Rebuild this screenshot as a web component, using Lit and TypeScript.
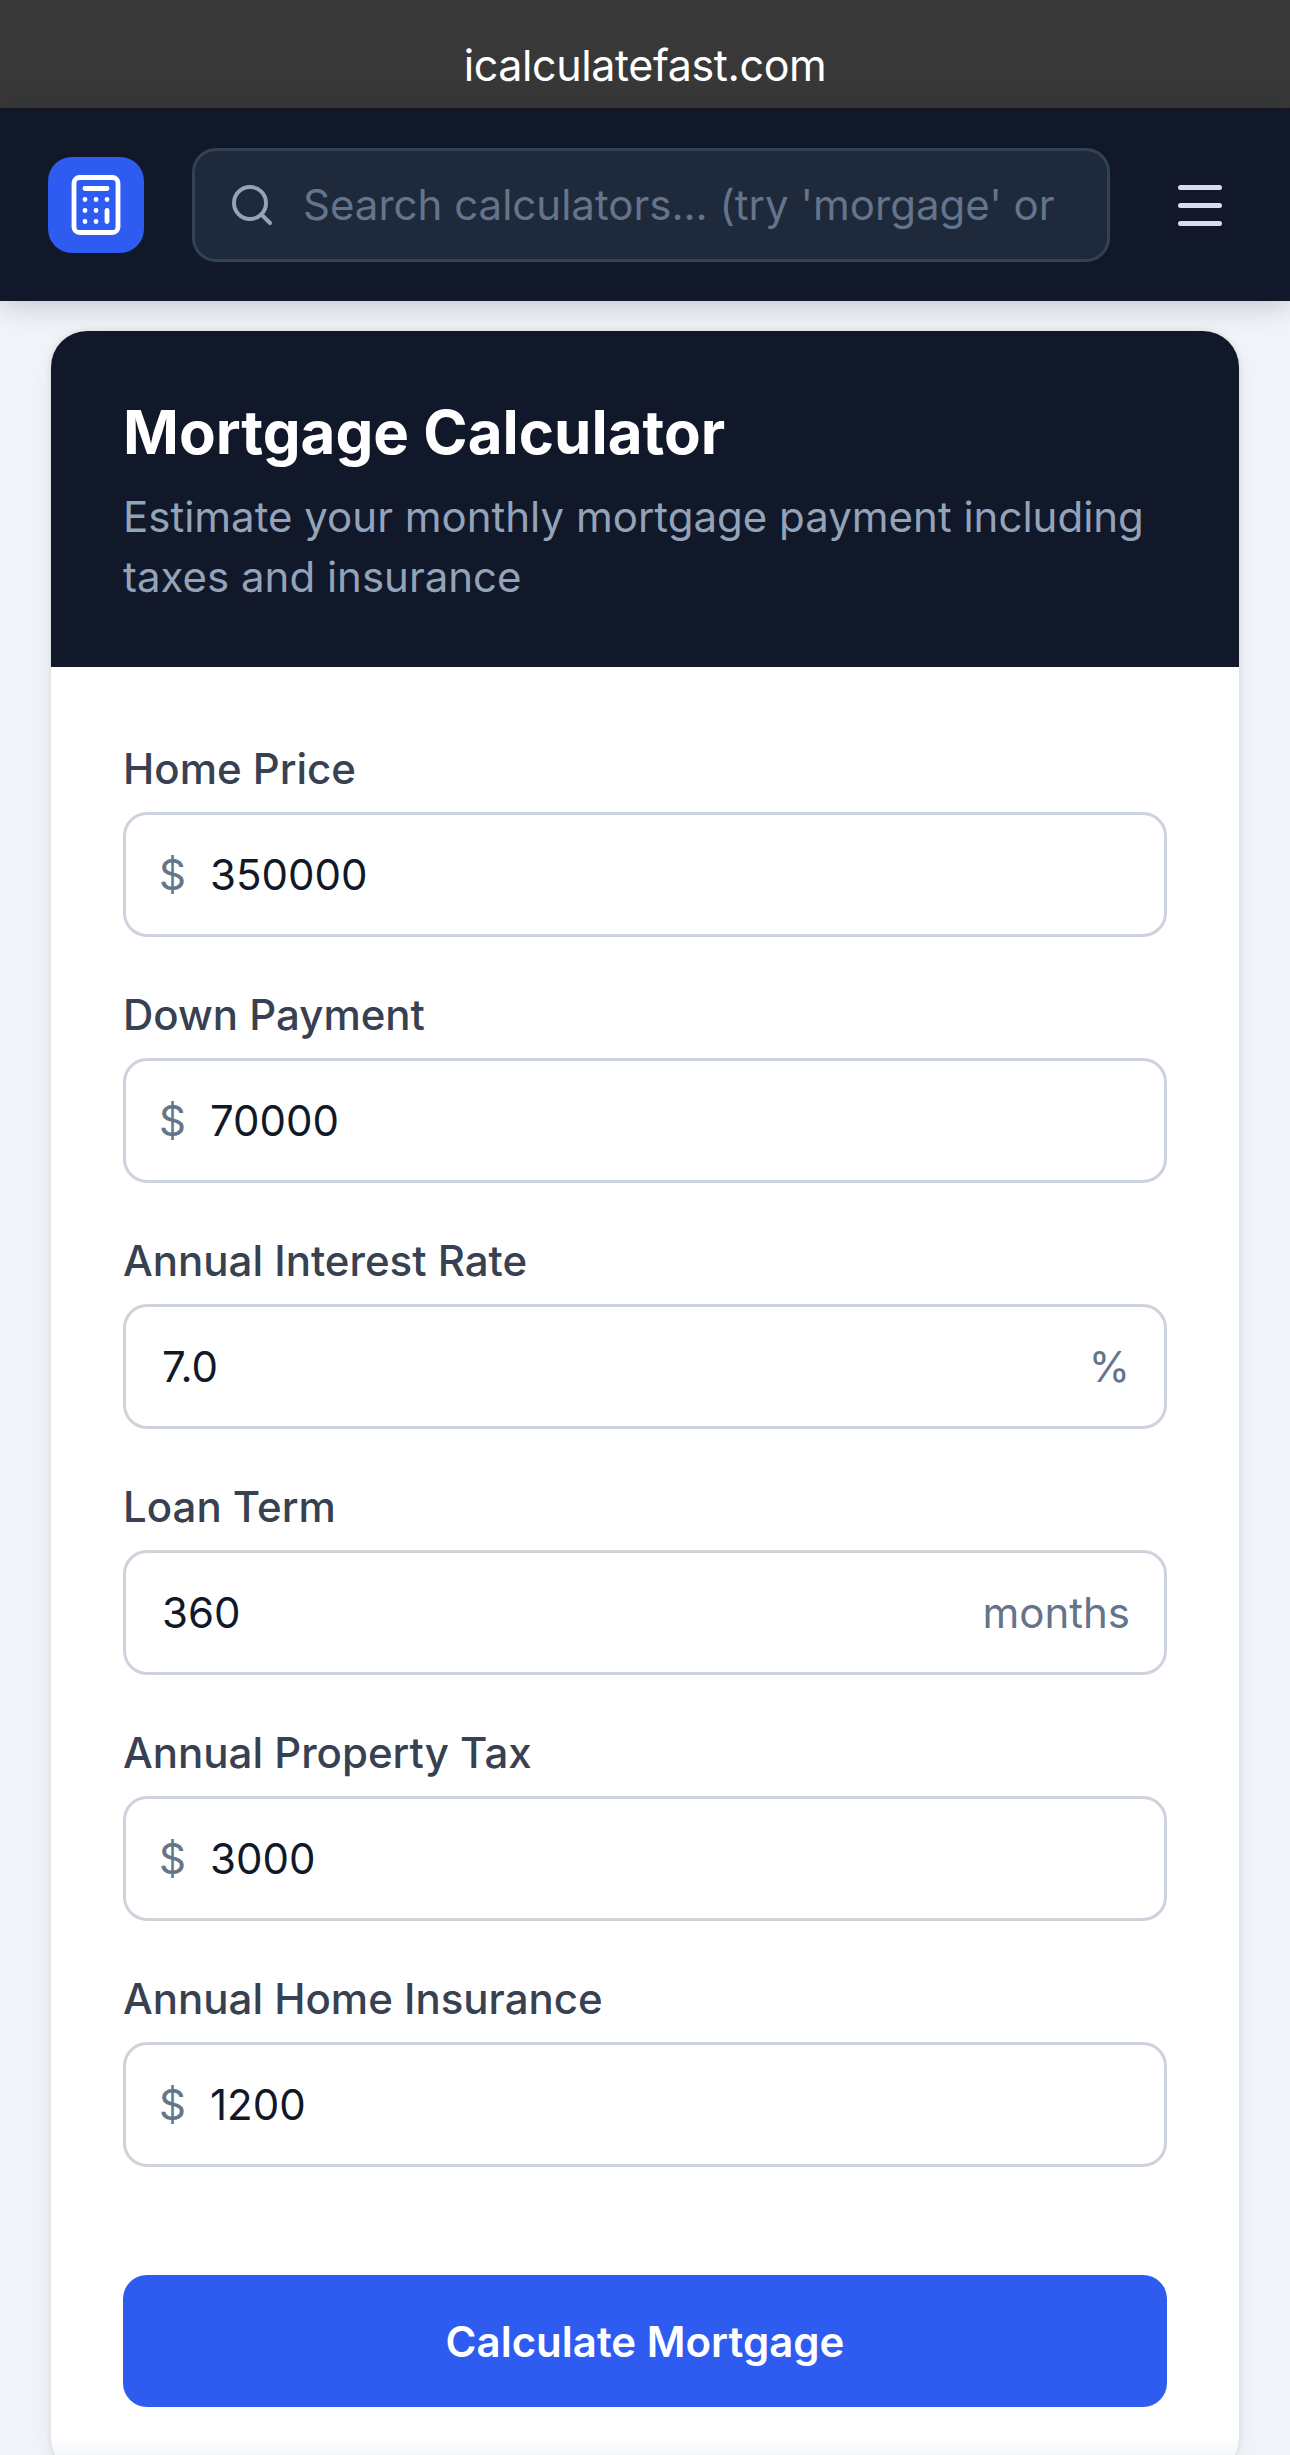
import { LitElement, html, css } from "lit";
import { customElement } from "lit/decorators.js";

type Field = { label: string; value: string; prefix?: string; suffix?: string };

const FIELDS: Field[] = [
  { label: "Home Price", value: "350000", prefix: "$" },
  { label: "Down Payment", value: "70000", prefix: "$" },
  { label: "Annual Interest Rate", value: "7.0", suffix: "%" },
  { label: "Loan Term", value: "360", suffix: "months" },
  { label: "Annual Property Tax", value: "3000", prefix: "$" },
  { label: "Annual Home Insurance", value: "1200", prefix: "$" },
];

@customElement("app-root")
export class AppRoot extends LitElement {
  static styles = css`
    :host {
      display: block;
      height: 100vh;
      overflow: hidden;
      background: #f1f5f9;
      font-family: Inter, "Liberation Sans", sans-serif;
    }
    * {
      box-sizing: border-box;
    }
    .address {
      height: 109px;
      padding-top: 11px;
      background: #383838;
      border-bottom: 1px solid #1a1a1a;
      color: #fff;
      font-size: 43px;
      line-height: 108px;
      text-align: center;
      letter-spacing: -0.4px;
    }
    .header {
      position: relative;
      z-index: 2;
      height: 192px;
      padding: 0 68px 0 48px;
      background: #10182a;
      display: flex;
      align-items: center;
      box-shadow: 0 4px 28px rgba(15, 23, 42, 0.22);
    }
    .logo {
      width: 96px;
      height: 96px;
      flex: none;
      border-radius: 24px;
      background: #2f5cf0;
      display: flex;
      align-items: center;
      justify-content: center;
      margin-right: 48px;
    }
    .search {
      flex: 1;
      min-width: 0;
      height: 114px;
      margin-top: -1px;
      background: #1e293b;
      border: 3px solid #334155;
      border-radius: 24px;
      display: flex;
      align-items: center;
      padding-left: 33px;
      gap: 27px;
    }
    .search svg {
      flex: none;
    }
    .search input {
      flex: 1;
      min-width: 0;
      border: 0;
      outline: 0;
      padding: 0;
      background: none;
      color: #f1f5f9;
      font: 400 42px Inter, "Liberation Sans", sans-serif;
    }
    .search input::placeholder {
      color: #64748b;
      opacity: 1;
    }
    .menu {
      margin-left: 68px;
      width: 44px;
      flex: none;
      padding: 0;
      border: 0;
      background: none;
      display: flex;
      flex-direction: column;
      gap: 13px;
    }
    .menu span {
      height: 5px;
      border-radius: 3px;
      background: #d8dee9;
    }
    main {
      padding: 30px 51px 0;
    }
    .card {
      position: relative;
      border-radius: 36px;
      background: #fff;
      overflow: hidden;
      box-shadow: 0 0 6px rgba(15, 23, 42, 0.1), 0 6px 24px rgba(15, 23, 42, 0.06);
    }
    /* soft fade where the card runs off the bottom of the page */
    .card::after {
      content: "";
      position: absolute;
      left: 0;
      right: 0;
      bottom: 19px;
      height: 18px;
      background: linear-gradient(rgba(226, 232, 240, 0), rgba(226, 232, 240, 0.4));
    }
    .card-head {
      height: 336px;
      padding: 68px 72px 0;
      background: #10182a;
    }
    h1 {
      margin: 0 0 22px;
      color: #fff;
      font-size: 60px;
      line-height: 66px;
      font-weight: 700;
    }
    .card-head p {
      margin: 0;
      color: #94a3b8;
      font-size: 42px;
      line-height: 60px;
    }
    .body {
      padding: 72px 72px 67px;
    }
    .field {
      margin-bottom: 48px;
    }
    label {
      display: block;
      height: 60px;
      margin-bottom: 13px;
      color: #374151;
      font-size: 42px;
      line-height: 60px;
      font-weight: 500;
    }
    .box {
      height: 125px;
      border: 3px solid #cdd3dd;
      border-radius: 24px;
      display: flex;
      align-items: center;
      padding: 0 34px 0 36px;
      font-size: 42px;
    }
    .box input {
      flex: 1;
      min-width: 0;
      border: 0;
      outline: 0;
      padding: 0;
      background: none;
      color: #111827;
      font: 400 42px Inter, "Liberation Sans", sans-serif;
    }
    .prefix {
      color: #64748b;
      margin: 0 24px 0 -3px;
    }
    .suffix {
      color: #64748b;
    }
    button.calc {
      display: block;
      width: 100%;
      height: 132px;
      margin-top: 108px;
      border: 0;
      border-radius: 24px;
      background: #2f5cf0;
      color: #fff;
      font: 600 42px Inter, "Liberation Sans", sans-serif;
    }
  `;

  renderField(f: Field) {
    return html`
      <div class="field">
        <label>${f.label}</label>
        <div class="box">
          ${f.prefix ? html`<span class="prefix">${f.prefix}</span>` : ""}
          <input type="text" .value=${f.value} />
          ${f.suffix ? html`<span class="suffix">${f.suffix}</span>` : ""}
        </div>
      </div>
    `;
  }

  render() {
    return html`
      <div class="address">icalculatefast.com</div>
      <header class="header">
        <div class="logo">
          <svg width="66" height="66" viewBox="0 0 24 24" fill="none" stroke="#fff" stroke-width="1.75" stroke-linecap="round" stroke-linejoin="round">
            <rect x="4" y="2" width="16" height="20" rx="2"></rect>
            <line x1="8" y1="6" x2="16" y2="6"></line>
            <line x1="16" y1="14" x2="16" y2="18"></line>
            <path d="M16 10h.01M12 10h.01M8 10h.01M12 14h.01M8 14h.01M12 18h.01M8 18h.01"></path>
          </svg>
        </div>
        <div class="search">
          <svg width="48" height="48" viewBox="0 0 24 24" fill="none" stroke="#94a3b8" stroke-width="2" stroke-linecap="round" stroke-linejoin="round">
            <circle cx="11" cy="11" r="8"></circle>
            <line x1="21" y1="21" x2="16.65" y2="16.65"></line>
          </svg>
          <input type="text" placeholder="Search calculators... (try 'morgage' or" />
        </div>
        <button class="menu"><span></span><span></span><span></span></button>
      </header>
      <main>
        <section class="card">
          <div class="card-head">
            <h1>Mortgage Calculator</h1>
            <p>Estimate your monthly mortgage payment including taxes and insurance</p>
          </div>
          <div class="body">
            ${FIELDS.map((f) => this.renderField(f))}
            <button class="calc">Calculate Mortgage</button>
          </div>
        </section>
      </main>
    `;
  }
}
